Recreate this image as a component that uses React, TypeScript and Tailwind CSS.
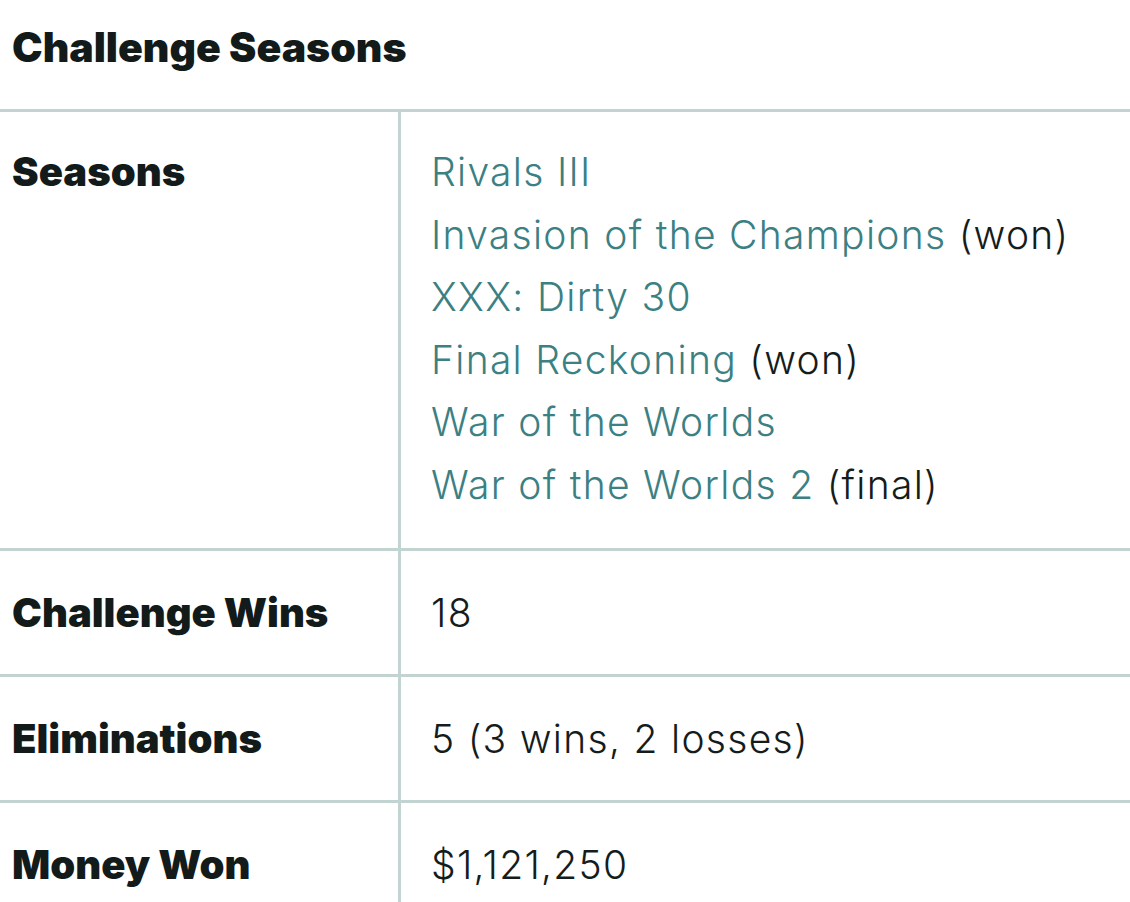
const seasons = [
    { name: 'Rivals III' },
    { name: 'Invasion of the Champions', note: '(won)' },
    { name: 'XXX: Dirty 30' },
    { name: 'Final Reckoning', note: '(won)' },
    { name: 'War of the Worlds' },
    { name: 'War of the Worlds 2', note: '(final)' },
];

const stats = [
    { label: 'Challenge Wins', value: '18' },
    { label: 'Eliminations', value: '5 (3 wins, 2 losses)' },
    { label: 'Money Won', value: '$1,121,250' },
];

const labelClass = "px-3 font-['Inter',sans-serif] text-[40px] font-black text-[#121a1a]";
const valueClass =
    "border-l-[3px] border-[#c3d3d1] pl-[30px] pr-3 font-['Inter',sans-serif] text-[39px] tracking-[1.3px] font-light text-[#141c1c]";

const App = () => {
    return (
        <div className="w-[1130px] h-[902px] overflow-hidden bg-white">
            <h2 className="h-[109px] px-3 pt-[19px] font-['Inter',sans-serif] text-[41px] leading-[56px] font-black text-[#121a1a]">
                Challenge Seasons
            </h2>

            <div className="grid grid-cols-[398px_1fr] border-t-[3px] border-[#c3d3d1] leading-[62.5px]">
                <div className={`${labelClass} pt-[29px] pb-[32px]`}>Seasons</div>
                <div className={`${valueClass} pt-[29px] pb-[32px]`}>
                    {seasons.map(season => (
                        <div key={season.name}>
                            <span className="text-[#3b8083]">{season.name}</span>
                            {season.note && <span> {season.note}</span>}
                        </div>
                    ))}
                </div>
            </div>

            {stats.map(stat => (
                <div
                    key={stat.label}
                    className="grid grid-cols-[398px_1fr] border-t-[3px] border-[#c3d3d1] leading-[63px]"
                >
                    <div className={`${labelClass} py-[30px]`}>{stat.label}</div>
                    <div className={`${valueClass} py-[30px]`}>{stat.value}</div>
                </div>
            ))}
        </div>
    );
};

export default App;
